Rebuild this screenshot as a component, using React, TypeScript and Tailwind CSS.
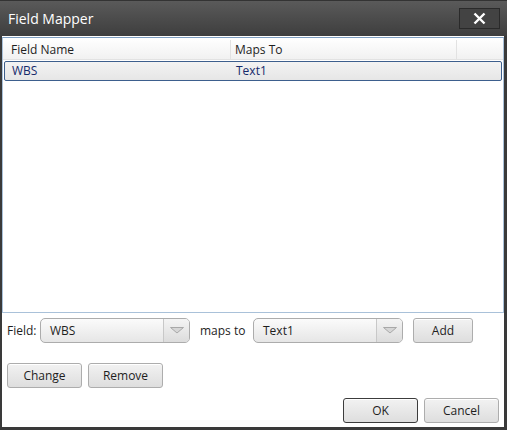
import React from 'react';

const font = { fontFamily: '"Open Sans", "Noto Sans", sans-serif' };

function Combo({ value }: { value: string }) {
  return (
    <div className="flex h-[25px] w-[150px] rounded-[5px] border border-[#acacac] bg-gradient-to-b from-[#fbfbfb] to-[#e6e6e6] overflow-hidden">
      <div className="flex flex-1 items-center pl-[9px] text-[12px] text-[#1e1e1e]">{value}</div>
      <div className="flex w-[26px] items-center justify-center border-l border-[#c8c8c8] bg-gradient-to-b from-[#f4f4f4] to-[#dcdcdc]">
        <svg width="14" height="7" viewBox="0 0 14 7">
          <path d="M0.5 0.5 L7 6 L13.5 0.5 Z" fill="#d6d6d6" stroke="#a8a8a8" strokeWidth="1" />
        </svg>
      </div>
    </div>
  );
}

function Btn({ label, w = 'w-[75px]', dark = false }: { label: string; w?: string; dark?: boolean }) {
  return (
    <div
      className={`flex h-[25px] ${w} items-center justify-center rounded-[3px] border ${
        dark ? 'border-[#3c3c3c]' : 'border-[#adadad]'
      } bg-gradient-to-b from-[#f2f2f2] to-[#dedede] text-[12px] text-[#1e1e1e] shadow-[inset_0_1px_0_#fff]`}
    >
      {label}
    </div>
  );
}

export default function App() {
  return (
    <div className="w-[507px] h-[430px] bg-[#3a3a3a] px-[2px] pb-[3px] pr-[3px] flex flex-col" style={font}>
      {/* title bar */}
      <div className="h-[36px] shrink-0 flex items-center justify-between bg-gradient-to-b from-[#5a5a5a] to-[#3e3e3e] -mx-[2px] px-[8px] mr-[-3px] border-t border-[#333]">
        <span className="text-[14px] text-white">Field Mapper</span>
        <div className="mr-[-1px] flex h-[21px] w-[41px] items-center justify-center border border-[#2a2a2a] bg-[#434343]">
          <svg width="13" height="13" viewBox="0 0 13 13">
            <path d="M1.5 1.5 L11.5 11.5 M11.5 1.5 L1.5 11.5" stroke="#ffffff" strokeWidth="2.4" />
          </svg>
        </div>
      </div>

      {/* content */}
      <div className="flex-1 bg-white flex flex-col pt-[1px]">
        {/* list */}
        <div className="h-[276px] border border-[#a9c1d9] border-t-[#7f9fc2] flex flex-col">
          <div className="flex h-[22px] pt-[2px] bg-gradient-to-b from-white to-[#f1f1f1] border-b border-[#e2e2e2] text-[12px] text-[#1e1e1e]">
            <div className="w-[228px] pl-[8px] flex items-center border-r border-[#e2e2e2]">Field Name</div>
            <div className="w-[226px] pl-[4px] flex items-center border-r border-[#e2e2e2]">Maps To</div>
            <div className="flex-1" />
          </div>
          <div className="mx-[1px] mt-[1px] flex h-[20px] rounded-[2px] border border-[#3d5f8d] bg-gradient-to-b from-[#f3f3f3] to-[#e6e6e6] text-[12px] text-[#162a6b]">
            <div className="w-[226px] pl-[7px] flex items-center">WBS</div>
            <div className="flex items-center pl-[5px]">Text1</div>
          </div>
        </div>

        {/* field row */}
        <div className="flex items-center mt-[5px] pl-[5px]">
          <span className="text-[12px] text-[#1e1e1e] w-[33px]">Field:</span>
          <Combo value="WBS" />
          <span className="text-[12px] text-[#1e1e1e] ml-[10px] w-[53px]">maps to</span>
          <Combo value="Text1" />
          <div className="ml-[10px]">
            <Btn label="Add" w="w-[60px]" />
          </div>
        </div>

        <div className="flex mt-[20px] pl-[5px] gap-[6px]">
          <Btn label="Change" />
          <Btn label="Remove" />
        </div>

        <div className="flex justify-end mt-[10px] pr-[5px] gap-[6px]">
          <Btn label="OK" dark />
          <Btn label="Cancel" />
        </div>
      </div>
    </div>
  );
}
